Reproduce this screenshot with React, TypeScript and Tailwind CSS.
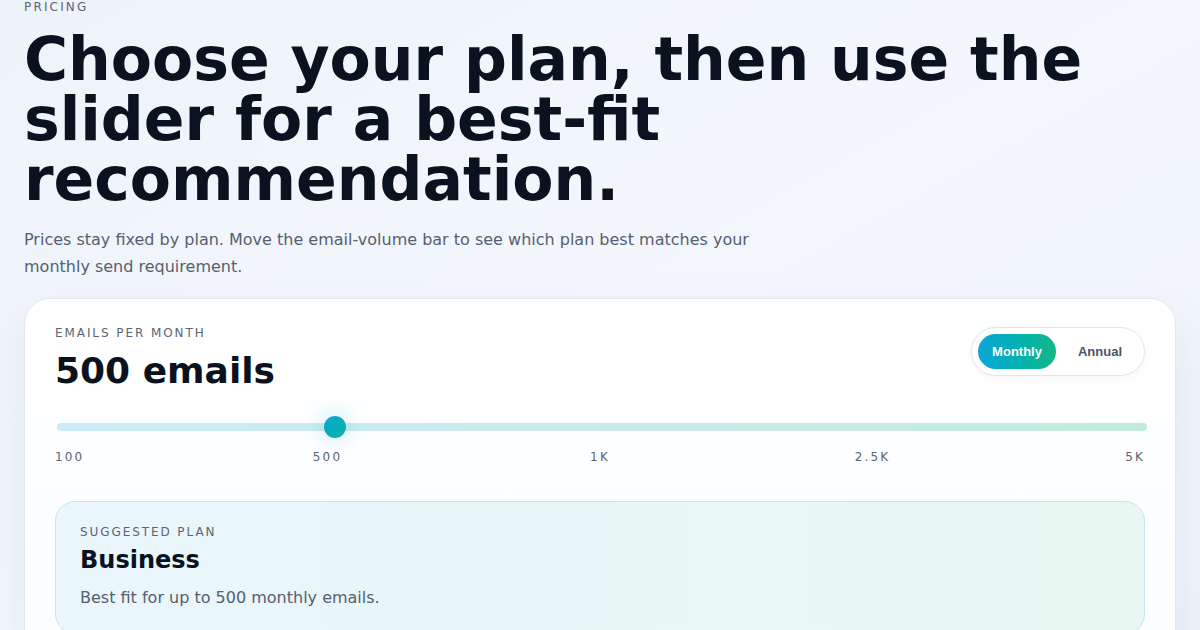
const TICKS = [
  { t: "100", cls: "left-0" },
  { t: "500", cls: "left-1/4 -translate-x-1/2" },
  { t: "1K", cls: "left-1/2 -translate-x-1/2" },
  { t: "2.5K", cls: "left-3/4 -translate-x-1/2" },
  { t: "5K", cls: "right-0" },
];

export default function App() {
  return (
    <div
      className="min-h-screen w-full overflow-hidden bg-gradient-to-br from-[#eef3fa] via-[#f3f7fd] to-[#eef3fa] px-6 text-[#0b1220]"
      style={{ fontFamily: '"DejaVu Sans", sans-serif' }}
    >
      <div className="text-[12px] leading-[14px] tracking-[0.18em] text-[#5b6573]">PRICING</div>

      <h1 className="mt-[15px] text-[60px] font-bold leading-[60px] text-[#0a1220]">
        Choose your plan, then use the
        <br />
        slider for a best-fit
        <br />
        recommendation.
      </h1>

      <p className="mt-[17px] max-w-[760px] text-[16px] leading-[27px] text-[#556070]">
        Prices stay fixed by plan. Move the email-volume bar to see which plan best matches your
        monthly send requirement.
      </p>

      <div className="mt-[18px] rounded-[26px] border border-[#e1e7ef] bg-gradient-to-b from-white to-[#fbfdff] px-[30px] pt-[27px] pb-8 shadow-[0_20px_50px_rgba(30,60,110,0.08)]">
        <div className="flex items-start justify-between">
          <div>
            <div className="text-[12px] leading-[14px] tracking-[0.16em] text-[#5b6573]">
              EMAILS PER MONTH
            </div>
            <div className="mt-[9px] text-[36px] font-bold leading-[44px] text-[#0a1220]">500 emails</div>
          </div>
          <div
            className="mt-px flex items-center gap-[6px] rounded-full border border-[#e1e6ed] bg-white p-[6px] shadow-[0_2px_6px_rgba(30,60,110,0.04)]"
            style={{ fontFamily: '"Liberation Sans", Arial, sans-serif' }}
          >
            <button className="h-[35px] rounded-full bg-gradient-to-r from-[#0ea5d9] to-[#12b886] px-[14px] text-[13px] font-bold text-white">
              Monthly
            </button>
            <button className="h-[35px] rounded-full px-[16px] text-[13px] font-bold text-[#4b5563]">
              Annual
            </button>
          </div>
        </div>

        <div className="relative mt-[30px] ml-[2px] mr-[-2px]">
          <div className="h-[8px] w-full rounded-full bg-gradient-to-r from-[#cdeaf8] to-[#c2ebdc]" />
          <div className="absolute left-[267px] top-1/2 h-[22px] w-[22px] -translate-y-1/2 rounded-full bg-gradient-to-br from-[#0ea5d9] to-[#10b39a] shadow-[0_0_16px_6px_rgba(14,165,217,0.12)]" />
        </div>

        <div className="relative mt-[19px] h-[14px] text-[12px] leading-[14px] tracking-[0.18em] text-[#5b6573]">
          {TICKS.map((k) => (
            <span key={k.t} className={`absolute top-0 ${k.cls}`}>
              {k.t}
            </span>
          ))}
        </div>

        <div className="mt-[37px] rounded-[20px] border border-[#c6e5ef] bg-gradient-to-r from-[#eaf6fc] to-[#e8f7f2] px-[24px] pt-[23px] pb-[24px]">
          <div className="text-[12px] leading-[14px] tracking-[0.16em] text-[#5b6573]">SUGGESTED PLAN</div>
          <div className="mt-[6px] text-[24px] font-bold leading-[30px] text-[#0a1220]">Business</div>
          <div className="mt-[12px] text-[16px] leading-[22px] text-[#556070]">
            Best fit for up to 500 monthly emails.
          </div>
        </div>
      </div>
    </div>
  );
}
